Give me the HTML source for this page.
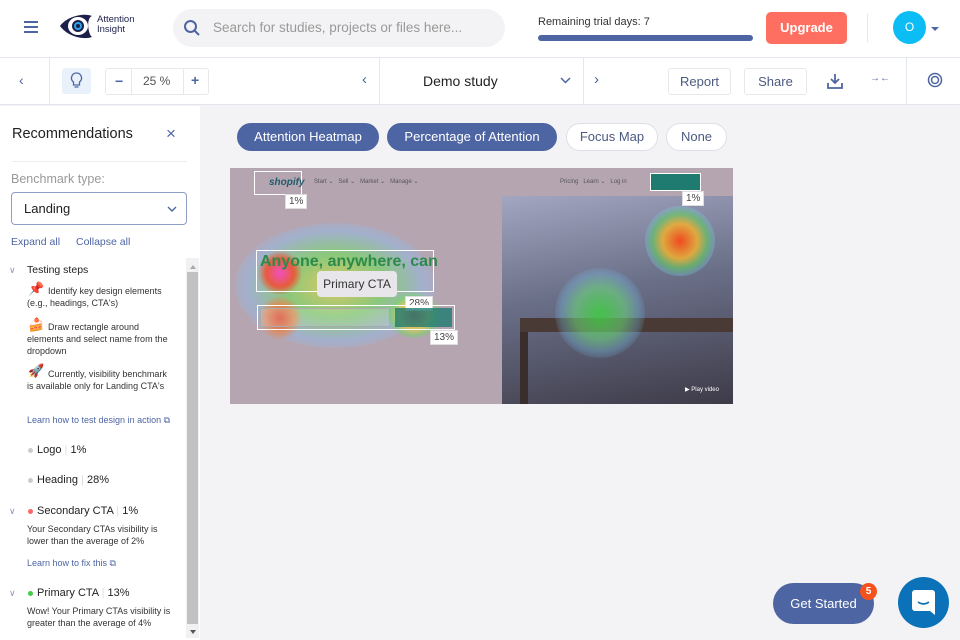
<!DOCTYPE html>
<html><head><style>
*{box-sizing:border-box;margin:0;padding:0}
body{width:960px;height:640px;overflow:hidden;background:#f3f3f5;font-family:"Liberation Sans",sans-serif;color:#222;position:relative}
.a{position:absolute}
.top{left:0;top:0;width:960px;height:58px;background:#fff;border-bottom:1px solid #e3e6ec}
.bar2{left:0;top:58px;width:960px;height:47px;background:#fff;border-bottom:1px solid #e3e6ec}
.side{left:0;top:106px;width:200px;height:534px;background:#fff}
.pill{position:absolute;top:123px;height:28px;border-radius:14px;font-size:13px;line-height:26px;text-align:center}
.pf{background:#4e65a3;color:#fff;border:1px solid #4e65a3}
.po{background:#fff;color:#4b5a80;border:1px solid #dde0e6}
.s{font-size:9px;color:#333;line-height:12px}
.lab{background:#fff;color:#444;font-size:10px;padding:1px 3px;border:1px solid #ddd}
</style></head><body>
<div class="a top"></div>
<div class="a" style="left:24px;top:21px;width:14px;height:2px;background:#4e65a3;box-shadow:0 5px 0 #4e65a3,0 10px 0 #4e65a3"></div>
<svg class="a" style="left:58px;top:12px" width="36" height="28" viewBox="0 0 36 28"><path d="M2 14 C10 3 28 1 34 4 C28 6 30 22 34 25 C26 28 10 25 2 14Z" fill="#1c1f4a"/><ellipse cx="20" cy="14" rx="10" ry="9" fill="#fff"/><circle cx="20" cy="14" r="6" fill="#1c1f4a"/><circle cx="20" cy="14" r="4" fill="#2aa3e8"/><circle cx="20" cy="14" r="2" fill="#1c1f4a"/></svg>
<div class="a" style="left:97px;top:15px;font-size:9.5px;line-height:10px;color:#1c1f4a">Attention<br>Insight</div>
<div class="a" style="left:173px;top:9px;width:332px;height:38px;border-radius:19px;background:#f3f3f5"></div>
<svg class="a" style="left:183px;top:19px" width="18" height="18" viewBox="0 0 18 18"><circle cx="7.5" cy="7.5" r="5.5" fill="none" stroke="#4e65a3" stroke-width="2"/><path d="M11.5 11.5 L16 16" stroke="#4e65a3" stroke-width="2"/></svg>
<div class="a" style="left:213px;top:20px;font-size:13.5px;color:#999">Search for studies, projects or files here...</div>
<div class="a" style="left:538px;top:16px;font-size:11px;color:#333">Remaining trial days: 7</div>
<div class="a" style="left:538px;top:35px;width:215px;height:6px;border-radius:3px;background:#4e65a3"></div>
<div class="a" style="left:766px;top:12px;width:81px;height:32px;border-radius:5px;background:#ff6f61;color:#fff;font-size:13px;font-weight:bold;text-align:center;line-height:32px">Upgrade</div>
<div class="a" style="left:867px;top:14px;width:1px;height:28px;background:#e3e6ec"></div>
<div class="a" style="left:893px;top:11px;width:33px;height:33px;border-radius:50%;background:#0cbdf5;color:#fff;font-size:12px;text-align:center;line-height:33px">O</div>
<div class="a" style="left:931px;top:27px;border:4px solid transparent;border-top:4px solid #4e65a3"></div>

<div class="a bar2"></div>
<div class="a" style="left:49px;top:58px;width:1px;height:47px;background:#e3e6ec"></div>
<div class="a" style="left:379px;top:58px;width:1px;height:47px;background:#e3e6ec"></div>
<div class="a" style="left:583px;top:58px;width:1px;height:47px;background:#e3e6ec"></div>
<div class="a" style="left:906px;top:58px;width:1px;height:47px;background:#e3e6ec"></div>
<div class="a" style="left:19px;top:72px;color:#4e65a3;font-size:14px">‹</div>
<div class="a" style="left:62px;top:68px;width:29px;height:26px;background:#e9f1fb;border-radius:3px"></div>
<svg class="a" style="left:70px;top:72px" width="13" height="18" viewBox="0 0 13 18"><path d="M6.5 1a5 5 0 0 0-3 9v3h6v-3a5 5 0 0 0-3-9zM4.5 15h4" fill="none" stroke="#4e65a3" stroke-width="1.3"/></svg>
<div class="a" style="left:105px;top:68px;width:104px;height:27px;border:1px solid #e6e8ec;border-radius:3px"></div>
<div class="a" style="left:131px;top:68px;width:1px;height:27px;background:#e6e8ec"></div>
<div class="a" style="left:183px;top:68px;width:1px;height:27px;background:#e6e8ec"></div>
<div class="a" style="left:115px;top:73px;font-size:14px;color:#4e65a3;font-weight:bold">−</div>
<div class="a" style="left:143px;top:74px;font-size:12px;color:#555">25 %</div>
<div class="a" style="left:191px;top:72px;font-size:14px;color:#4e65a3;font-weight:bold">+</div>
<div class="a" style="left:362px;top:71px;color:#4e65a3;font-size:15px">‹</div>
<div class="a" style="left:423px;top:73px;font-size:14px;color:#222">Demo study</div>
<svg class="a" style="left:560px;top:77px" width="11" height="7"><path d="M1 1l4.5 4.5L10 1" fill="none" stroke="#4e65a3" stroke-width="1.5"/></svg>
<div class="a" style="left:594px;top:71px;color:#4e65a3;font-size:15px">›</div>
<div class="a" style="left:668px;top:68px;width:63px;height:27px;border:1px solid #e6e8ec;border-radius:3px;font-size:13px;color:#4b5a80;text-align:center;line-height:25px">Report</div>
<div class="a" style="left:744px;top:68px;width:63px;height:27px;border:1px solid #e6e8ec;border-radius:3px;font-size:13px;color:#4b5a80;text-align:center;line-height:25px">Share</div>
<svg class="a" style="left:826px;top:72px" width="18" height="18" viewBox="0 0 18 18"><path d="M9 2v9M5 7l4 4 4-4M2 11v5h14v-5" fill="none" stroke="#4e65a3" stroke-width="1.8"/></svg>
<div class="a" style="left:870px;top:73px;font-size:10px;color:#4e65a3;font-weight:bold">→←</div>
<svg class="a" style="left:927px;top:72px" width="16" height="16"><circle cx="8" cy="8" r="6.5" fill="none" stroke="#4e65a3" stroke-width="1.5"/><circle cx="8" cy="8" r="3.5" fill="none" stroke="#4e65a3" stroke-width="1.5"/></svg>

<div class="a side"></div>
<div class="a" style="left:12px;top:126px;font-size:14.5px">Recommendations</div>
<div class="a" style="left:166px;top:124px;font-size:17px;color:#4e65a3">×</div>
<div class="a" style="left:12px;top:161px;width:175px;height:1px;background:#eee"></div>
<div class="a" style="left:11px;top:172px;font-size:12.5px;color:#999">Benchmark type:</div>
<div class="a" style="left:11px;top:192px;width:176px;height:33px;border:1px solid #8f9cc4;border-radius:4px"></div>
<div class="a" style="left:24px;top:201px;font-size:13px">Landing</div>
<svg class="a" style="left:167px;top:206px" width="10" height="6"><path d="M1 1l4 4 4-4" fill="none" stroke="#4e65a3" stroke-width="1.4"/></svg>
<div class="a" style="left:11px;top:236px;font-size:10.5px;color:#4e65a3">Expand all</div>
<div class="a" style="left:76px;top:236px;font-size:10.5px;color:#4e65a3">Collapse all</div>
<div class="a" style="left:186px;top:258px;width:13px;height:380px;background:#f1f1f1"></div>
<div class="a" style="left:187px;top:272px;width:11px;height:352px;background:#c1c1c1"></div>
<div class="a" style="left:190px;top:262px;border:3px solid transparent;border-bottom:4px solid #aaa"></div>
<div class="a" style="left:190px;top:630px;border:3px solid transparent;border-top:4px solid #555"></div>

<div class="a" style="left:9px;top:265px;font-size:9px;color:#8a97bb">∨</div>
<div class="a" style="left:27px;top:264px;font-size:10.5px">Testing steps</div>
<div class="a" style="left:28px;top:282px;font-size:13px;line-height:13px">📌</div>
<div class="a s" style="left:27px;top:285px;width:150px;text-indent:21px">Identify key design elements (e.g., headings, CTA's)</div>
<div class="a" style="left:28px;top:318px;font-size:13px;line-height:13px">🍰</div>
<div class="a s" style="left:27px;top:321px;width:145px;text-indent:21px">Draw rectangle around elements and select name from the dropdown</div>
<div class="a" style="left:28px;top:364px;font-size:13px;line-height:13px">🚀</div>
<div class="a s" style="left:27px;top:368px;width:140px;text-indent:21px">Currently, visibility benchmark is available only for Landing CTA's</div>
<div class="a" style="left:27px;top:415px;font-size:9px;color:#4e65a3">Learn how to test design in action ⧉</div>
<div class="a" style="left:28px;top:448px;width:5px;height:5px;border-radius:50%;background:#ccc"></div>
<div class="a" style="left:37px;top:444px;font-size:11px">Logo <span style="color:#ddd">|</span> 1%</div>
<div class="a" style="left:28px;top:478px;width:5px;height:5px;border-radius:50%;background:#ccc"></div>
<div class="a" style="left:37px;top:474px;font-size:11px">Heading <span style="color:#ddd">|</span> 28%</div>
<div class="a" style="left:9px;top:506px;font-size:9px;color:#8a97bb">∨</div>
<div class="a" style="left:28px;top:509px;width:5px;height:5px;border-radius:50%;background:#f66"></div>
<div class="a" style="left:37px;top:505px;font-size:11px">Secondary CTA <span style="color:#ddd">|</span> 1%</div>
<div class="a s" style="left:27px;top:523px;width:150px">Your Secondary CTAs visibility is lower than the average of 2%</div>
<div class="a" style="left:27px;top:558px;font-size:9px;color:#4e65a3">Learn how to fix this ⧉</div>
<div class="a" style="left:9px;top:588px;font-size:9px;color:#8a97bb">∨</div>
<div class="a" style="left:28px;top:591px;width:5px;height:5px;border-radius:50%;background:#4c4"></div>
<div class="a" style="left:37px;top:587px;font-size:11px">Primary CTA <span style="color:#ddd">|</span> 13%</div>
<div class="a s" style="left:27px;top:605px;width:150px">Wow! Your Primary CTAs visibility is greater than the average of 4%</div>

<div class="pill pf" style="left:237px;width:142px">Attention Heatmap</div>
<div class="pill pf" style="left:387px;width:170px">Percentage of Attention</div>
<div class="pill po" style="left:566px;width:92px">Focus Map</div>
<div class="pill po" style="left:666px;width:61px">None</div>

<div class="a" style="left:230px;top:168px;width:503px;height:236px;background:#b5a5b1;overflow:hidden">
 <div class="a" style="left:272px;top:28px;width:231px;height:208px;background:linear-gradient(170deg,#a3a6c0,#6a6f88 45%,#3e3b48)"></div>
 <div class="a" style="left:290px;top:150px;width:213px;height:14px;background:#4a3a36"></div>
 <div class="a" style="left:290px;top:164px;width:8px;height:72px;background:#3a2e2c"></div>
 <div class="a" style="left:5px;top:55px;width:200px;height:125px;border-radius:50%;background:radial-gradient(ellipse,rgba(230,210,80,.8) 0%,rgba(120,215,100,.7) 35%,rgba(140,190,240,.45) 62%,transparent 78%)"></div>
 <div class="a" style="left:28px;top:83px;width:44px;height:44px;border-radius:50%;background:radial-gradient(#f050c0,rgba(240,80,50,.9) 45%,transparent 72%)"></div>
 <div class="a" style="left:28px;top:128px;width:44px;height:44px;border-radius:50%;background:radial-gradient(rgba(224,74,48,.9),rgba(240,128,64,.7) 45%,transparent 72%)"></div>
 <div class="a" style="left:158px;top:125px;width:52px;height:45px;border-radius:50%;background:radial-gradient(rgba(224,74,48,.9),rgba(240,208,64,.7) 40%,rgba(112,216,96,.5) 62%,transparent 78%)"></div>
 <div class="a" style="left:415px;top:38px;width:70px;height:70px;border-radius:50%;background:radial-gradient(#f04a20,rgba(240,176,48,.85) 35%,rgba(96,208,96,.6) 55%,rgba(120,200,240,.3) 70%,transparent 80%)"></div>
 <div class="a" style="left:325px;top:100px;width:90px;height:90px;border-radius:50%;background:radial-gradient(rgba(64,208,64,.85),rgba(112,224,128,.55) 40%,rgba(120,200,240,.3) 62%,transparent 76%)"></div>
 <div class="a" style="left:24px;top:3px;width:48px;height:24px;border:1px solid #fff;font-size:10px;font-weight:bold;font-style:italic;color:#1e5c6a;line-height:22px;padding-left:14px">shopify</div>
 <div class="a" style="left:84px;top:10px;font-size:6px;color:#555">Start ⌄ &nbsp; Sell ⌄ &nbsp; Market ⌄ &nbsp; Manage ⌄</div>
 <div class="a" style="left:330px;top:10px;font-size:6px;color:#555">Pricing &nbsp; Learn ⌄ &nbsp; Log in</div>
 <div class="a" style="left:420px;top:5px;width:51px;height:18px;background:#1f7a70;border:1px solid #fff"></div>
 <div class="a lab" style="left:55px;top:26px">1%</div>
 <div class="a lab" style="left:452px;top:23px">1%</div>
 <div class="a" style="left:26px;top:82px;width:178px;height:42px;border:1px solid #fff"></div>
 <div class="a" style="left:30px;top:85px;font-size:16px;font-weight:bold;color:#2c8a4a">Anyone, anywhere, can</div>
 <div class="a" style="left:87px;top:103px;width:80px;height:26px;background:#e8e6ea;border-radius:4px;font-size:12px;color:#333;line-height:26px;text-align:center">Primary CTA</div>
 <div class="a lab" style="left:175px;top:128px">28%</div>
 <div class="a" style="left:27px;top:137px;width:198px;height:25px;border:1px solid #fff"></div>
 <div class="a" style="left:30px;top:140px;width:130px;height:19px;border:1px solid #aaa;background:rgba(255,255,255,.15)"></div>
 <div class="a" style="left:165px;top:140px;width:57px;height:19px;background:#1f7a70;opacity:.8"></div>
 <div class="a lab" style="left:200px;top:162px">13%</div>
 <div class="a" style="left:455px;top:218px;font-size:6px;color:#fff">▶ Play video</div>
</div>

<div class="a" style="left:773px;top:583px;width:101px;height:41px;border-radius:21px;background:#4e65a3;color:#fff;font-size:13px;text-align:center;line-height:41px">Get Started</div>
<div class="a" style="left:860px;top:583px;width:17px;height:17px;border-radius:50%;background:#f4511e;color:#fff;font-size:10px;font-weight:bold;text-align:center;line-height:17px">5</div>
<div class="a" style="left:898px;top:577px;width:51px;height:51px;border-radius:50%;background:#0b72b9"></div>
<svg class="a" style="left:911px;top:589px" width="25" height="27" viewBox="0 0 25 27"><path d="M4 1h17a3 3 0 0 1 3 3v22l-5-4H4a3 3 0 0 1-3-3V4a3 3 0 0 1 3-3z" fill="#fff"/><path d="M7 13q5.5 4 11 0" fill="none" stroke="#0b72b9" stroke-width="1.6"/></svg>
</body></html>
